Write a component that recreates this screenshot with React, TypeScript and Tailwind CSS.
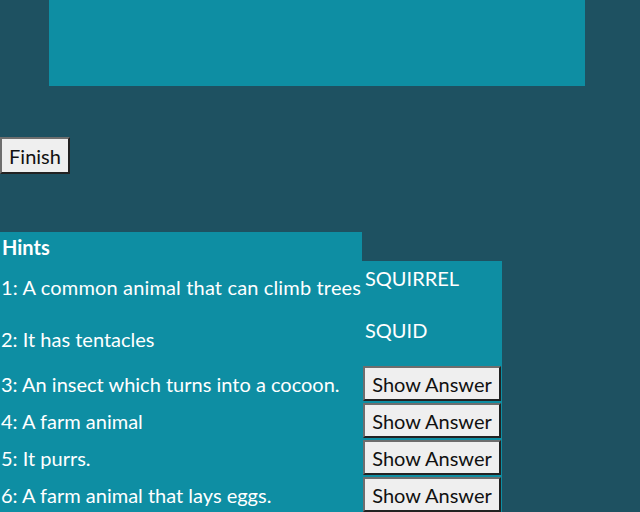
import React from "react";

const font = { fontFamily: '"Segoe UI", Lato, "Noto Sans", sans-serif' };

function Btn({ children, className = "" }: { children: React.ReactNode; className?: string }) {
  return (
    <button
      className={
        "bg-[#efefef] text-[#111] text-[20px] leading-none border-2 border-t-[#6e6e6e] border-l-[#6e6e6e] border-b-[#222] border-r-[#222] " +
        className
      }
    >
      {children}
    </button>
  );
}

export default function App() {
  const rows = [
    { n: 3, t: "An insect which turns into a cocoon." },
    { n: 4, t: "A farm animal" },
    { n: 5, t: "It purrs." },
    { n: 6, t: "A farm animal that lays eggs." },
  ];
  return (
    <div className="w-[640px] h-[512px] overflow-hidden bg-[#1e5161] text-white" style={font}>
      <div className="ml-[49px] w-[536px] h-[86px] bg-[#0e8ea3]" />
      <div className="pt-[51px]">
        <Btn className="w-[70px] h-[37px] px-[6px]">Finish</Btn>
      </div>
      <div className="mt-[58px] grid grid-cols-[362px_140px] text-[20px]">
        <div className="bg-[#0e8ea3] h-[29px] flex items-center pl-[2px] pt-[1px] font-bold">Hints</div>
        <div />
        <div className="bg-[#0e8ea3] h-[52px] flex items-center pl-[1px] tracking-[0.15px]">1: A common animal that can climb trees</div>
        <div className="bg-[#0e8ea3] h-[52px] pt-[2px] pl-[3px]">SQUIRREL</div>
        <div className="bg-[#0e8ea3] h-[52px] flex items-center pl-[1px]">2: It has tentacles</div>
        <div className="bg-[#0e8ea3] h-[52px] pt-[2px] pl-[3px]">SQUID</div>
        {rows.map((r) => (
          <React.Fragment key={r.n}>
            <div className="bg-[#0e8ea3] h-[37px] flex items-center pl-[1px]">
              {r.n}: {r.t}
            </div>
            <div className="bg-[#0e8ea3] h-[37px] flex items-center pl-[1px]">
              <Btn className="w-[138px] h-[35px]">Show Answer</Btn>
            </div>
          </React.Fragment>
        ))}
      </div>
    </div>
  );
}
